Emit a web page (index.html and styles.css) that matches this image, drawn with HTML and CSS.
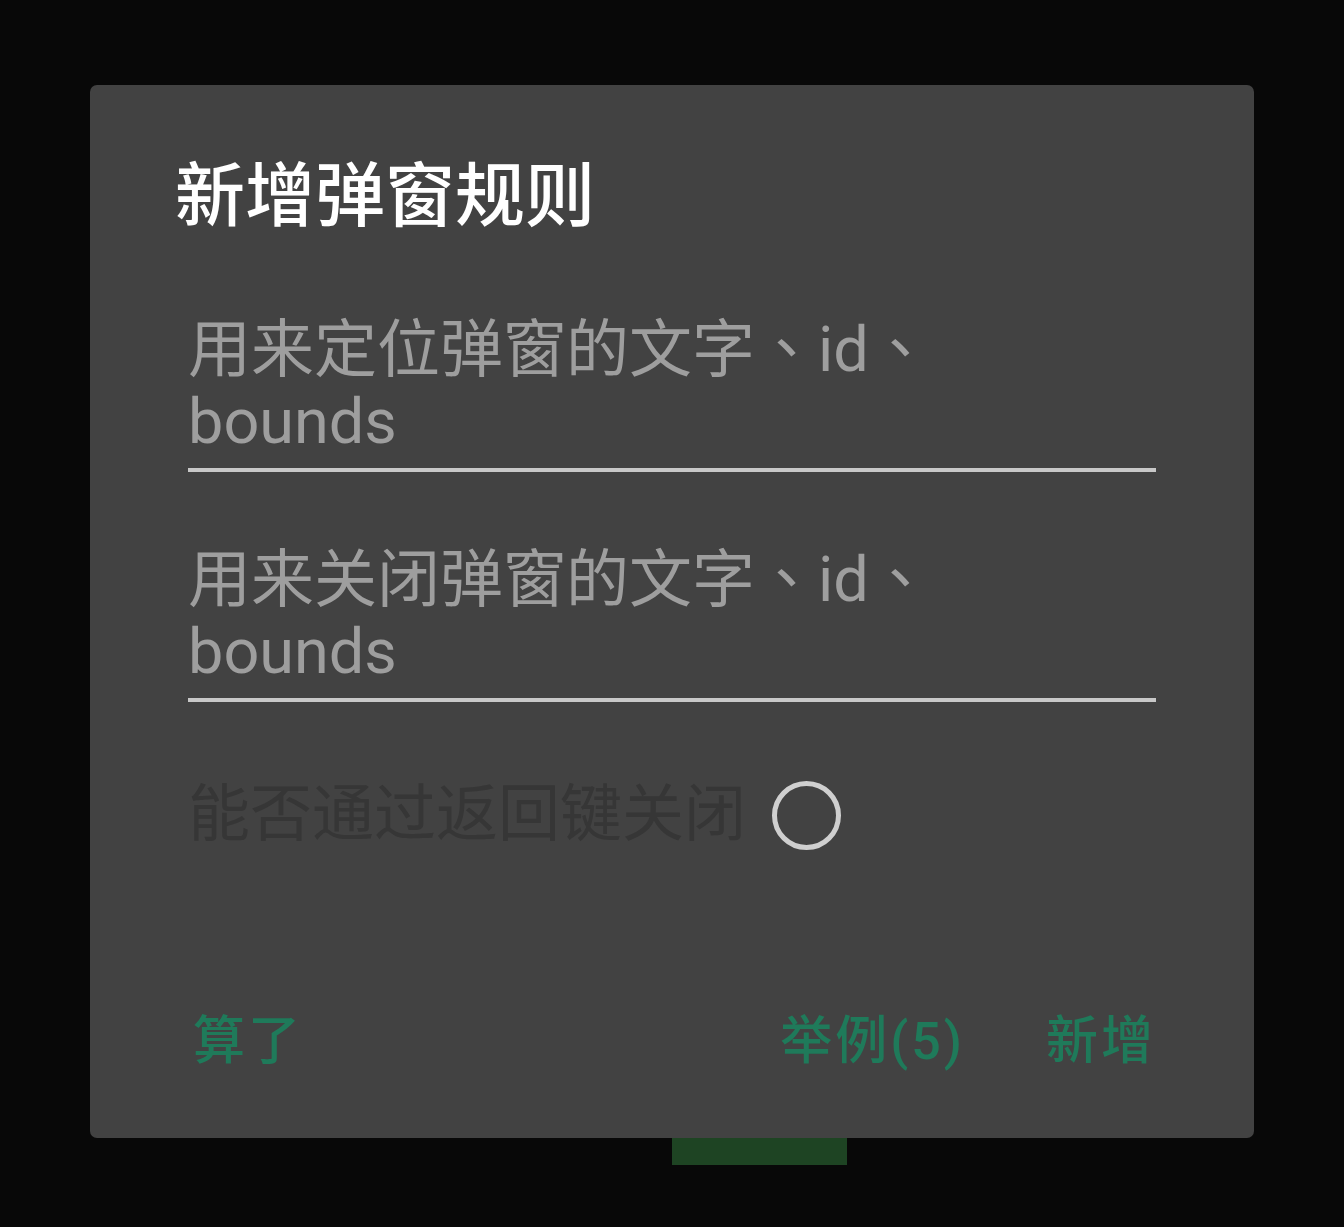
FILE: index.html
```html
<!DOCTYPE html>
<html lang="zh-CN">
<head>
<meta charset="utf-8">
<title>新增弹窗规则</title>
<link rel="stylesheet" href="styles.css">
</head>
<body>
<div class="screen">
  <div class="dialog">
    <div class="title">新增弹窗规则</div>
    <div class="form">
      <div class="field"><span class="hint" lang="zh-TW">用来定位弹窗的文字、id、bounds</span></div>
      <div class="field field-second"><span class="hint" lang="zh-TW">用来关闭弹窗的文字、id、bounds</span></div>
      <div class="toggle-row">
        <span class="toggle-label">能否通过返回键关闭</span>
        <span class="check"></span>
      </div>
    </div>
    <div class="actions">
      <span class="btn">算了</span>
      <span class="spacer"></span>
      <span class="btn">举例(5)</span>
      <span class="btn btn-last">新增</span>
    </div>
  </div>
  <div class="bar"></div>
</div>
</body>
</html>
```

FILE: styles.css
```css
html, body {
  margin: 0;
  padding: 0;
  background: #080808;
}
body {
  width: 1344px;
  height: 1227px;
  overflow: hidden;
  font-family: Roboto, "Noto Sans CJK SC", sans-serif;
}
.screen {
  display: flex;
  flex-direction: column;
}
.dialog {
  margin: 85px 0 0 90px;
  width: 1164px;
  height: 1053px;
  box-sizing: border-box;
  background: #424242;
  border-radius: 7px;
  padding: 70px 85px 66px 85px;
  display: flex;
  flex-direction: column;
}
.title {
  font-size: 70px;
  font-weight: 500;
  color: #ffffff;
  line-height: 84px;
}
.form {
  margin: 75px 13px 0 13px;
  display: flex;
  flex-direction: column;
}
.field {
  border-bottom: 4px solid #c8c8c8;
  padding: 0 40px 10px 0;
}
.field-second {
  margin-top: 72px;
}
.hint {
  font-family: Roboto, "Noto Sans CJK TC", sans-serif;
  font-size: 63px;
  line-height: 72px;
  color: #9e9e9e;
}
.toggle-row {
  margin-top: 77px;
  display: flex;
  align-items: center;
  height: 72px;
}
.toggle-label {
  font-size: 62px;
  line-height: 72px;
  color: #363636;
}
.check {
  margin-left: 26px;
  width: 59px;
  height: 59px;
  border: 5px solid #cfcfcf;
  border-radius: 50%;
}
.actions {
  margin-top: auto;
  display: flex;
  align-items: center;
  height: 60px;
}
.btn {
  font-size: 52px;
  font-weight: 500;
  line-height: 60px;
  letter-spacing: 3px;
  color: #1f7a5a;
  padding: 0 14px 0 18px;
}
.spacer {
  flex: 1;
}
.btn-last {
  margin-left: 49px;
  padding-right: 13px;
}
.bar {
  margin-left: 672px;
  width: 175px;
  height: 27px;
  background: #1e4423;
}
```
